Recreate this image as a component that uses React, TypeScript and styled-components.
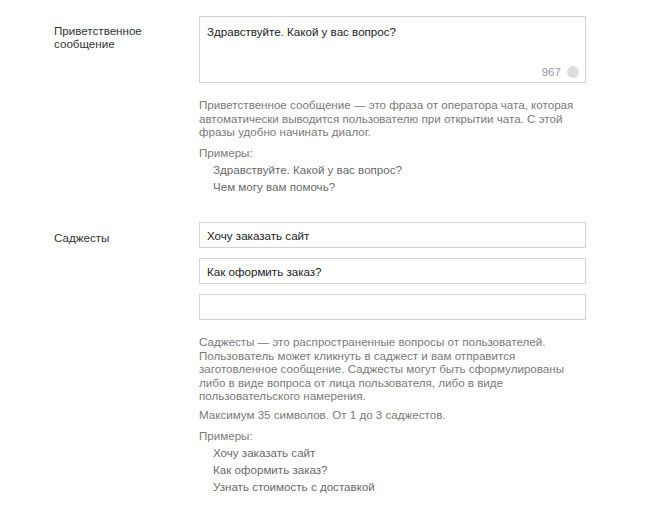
import React from 'react'
import styled, { createGlobalStyle } from 'styled-components'

const GlobalStyle = createGlobalStyle`
	body {
		margin: 0;
		background: #ffffff;
		font-family: "Liberation Sans", Arial, sans-serif;
		font-size: 11.6px;
		color: #333333;
	}
`

const Page = styled.div`
	display: flex;
	flex-direction: column;
	gap: 27px;
	padding: 16px 0 0 54px;
	width: 532px;
`

const Row = styled.div`
	display: grid;
	grid-template-columns: 145px 387px;
`

const Label = styled.div<{ $top: number }>`
	line-height: 13px;
	padding-top: ${p => p.$top}px;
	color: #333;
`

const Field = styled.div`
	display: flex;
	flex-direction: column;
`

const TextBox = styled.div`
	position: relative;
	height: 67px;
	box-sizing: border-box;
	border: 1px solid #d4d4d4;
	padding: 6.5px 7px 0;
	line-height: 15px;
	color: #222;
`

const Counter = styled.div`
	position: absolute;
	right: 6px;
	bottom: 3px;
	display: flex;
	align-items: center;
	gap: 6px;
	line-height: 15px;
	color: #999;
`

const Dot = styled.span`
	width: 12px;
	height: 12px;
	border-radius: 50%;
	background: #dddddd;
`

const Inputs = styled.div`
	display: flex;
	flex-direction: column;
	gap: 10px;
`

const Input = styled.div`
	height: 26px;
	box-sizing: border-box;
	border: 1px solid #d4d4d4;
	padding: 0 7px;
	display: flex;
	align-items: center;
	color: #222;
`

const Help = styled.div`
	margin-top: 15.3px;
	color: #7a7a7a;
`

const Para = styled.p`
	margin: 0 0 5.5px;
	line-height: 13.4px;
`

const Caption = styled.div`
	line-height: 17px;
`

const Examples = styled.div`
	padding-left: 14px;
	line-height: 17px;
	color: #6a6a6a;
`

const App: React.FC = () => {
	return (
		<>
			<GlobalStyle />
			<Page>
				<Row>
					<Label $top={8}>Приветственное<br />сообщение</Label>
					<Field>
						<TextBox>
							Здравствуйте. Какой у вас вопрос?
							<Counter>967<Dot /></Counter>
						</TextBox>
						<Help>
							<Para>
								Приветственное сообщение — это фраза от оператора чата, которая<br />
								автоматически выводится пользователю при открытии чата. С этой<br />
								фразы удобно начинать диалог.
							</Para>
							<Caption>Примеры:</Caption>
							<Examples>
								<div>Здравствуйте. Какой у вас вопрос?</div>
								<div>Чем могу вам помочь?</div>
							</Examples>
						</Help>
					</Field>
				</Row>
				<Row>
					<Label $top={9}>Саджесты</Label>
					<Field>
						<Inputs>
							<Input>Хочу заказать сайт</Input>
							<Input>Как оформить заказ?</Input>
							<Input />
						</Inputs>
						<Help>
							<Para>
								Саджесты — это распространенные вопросы от пользователей.<br />
								Пользователь может кликнуть в саджест и вам отправится<br />
								заготовленное сообщение. Саджесты могут быть сформулированы<br />
								либо в виде вопроса от лица пользователя, либо в виде<br />
								пользовательского намерения.
							</Para>
							<Para>Максимум 35 символов. От 1 до 3 саджестов.</Para>
							<Caption>Примеры:</Caption>
							<Examples>
								<div>Хочу заказать сайт</div>
								<div>Как оформить заказ?</div>
								<div>Узнать стоимость с доставкой</div>
							</Examples>
						</Help>
					</Field>
				</Row>
			</Page>
		</>
	)
}

export default App
